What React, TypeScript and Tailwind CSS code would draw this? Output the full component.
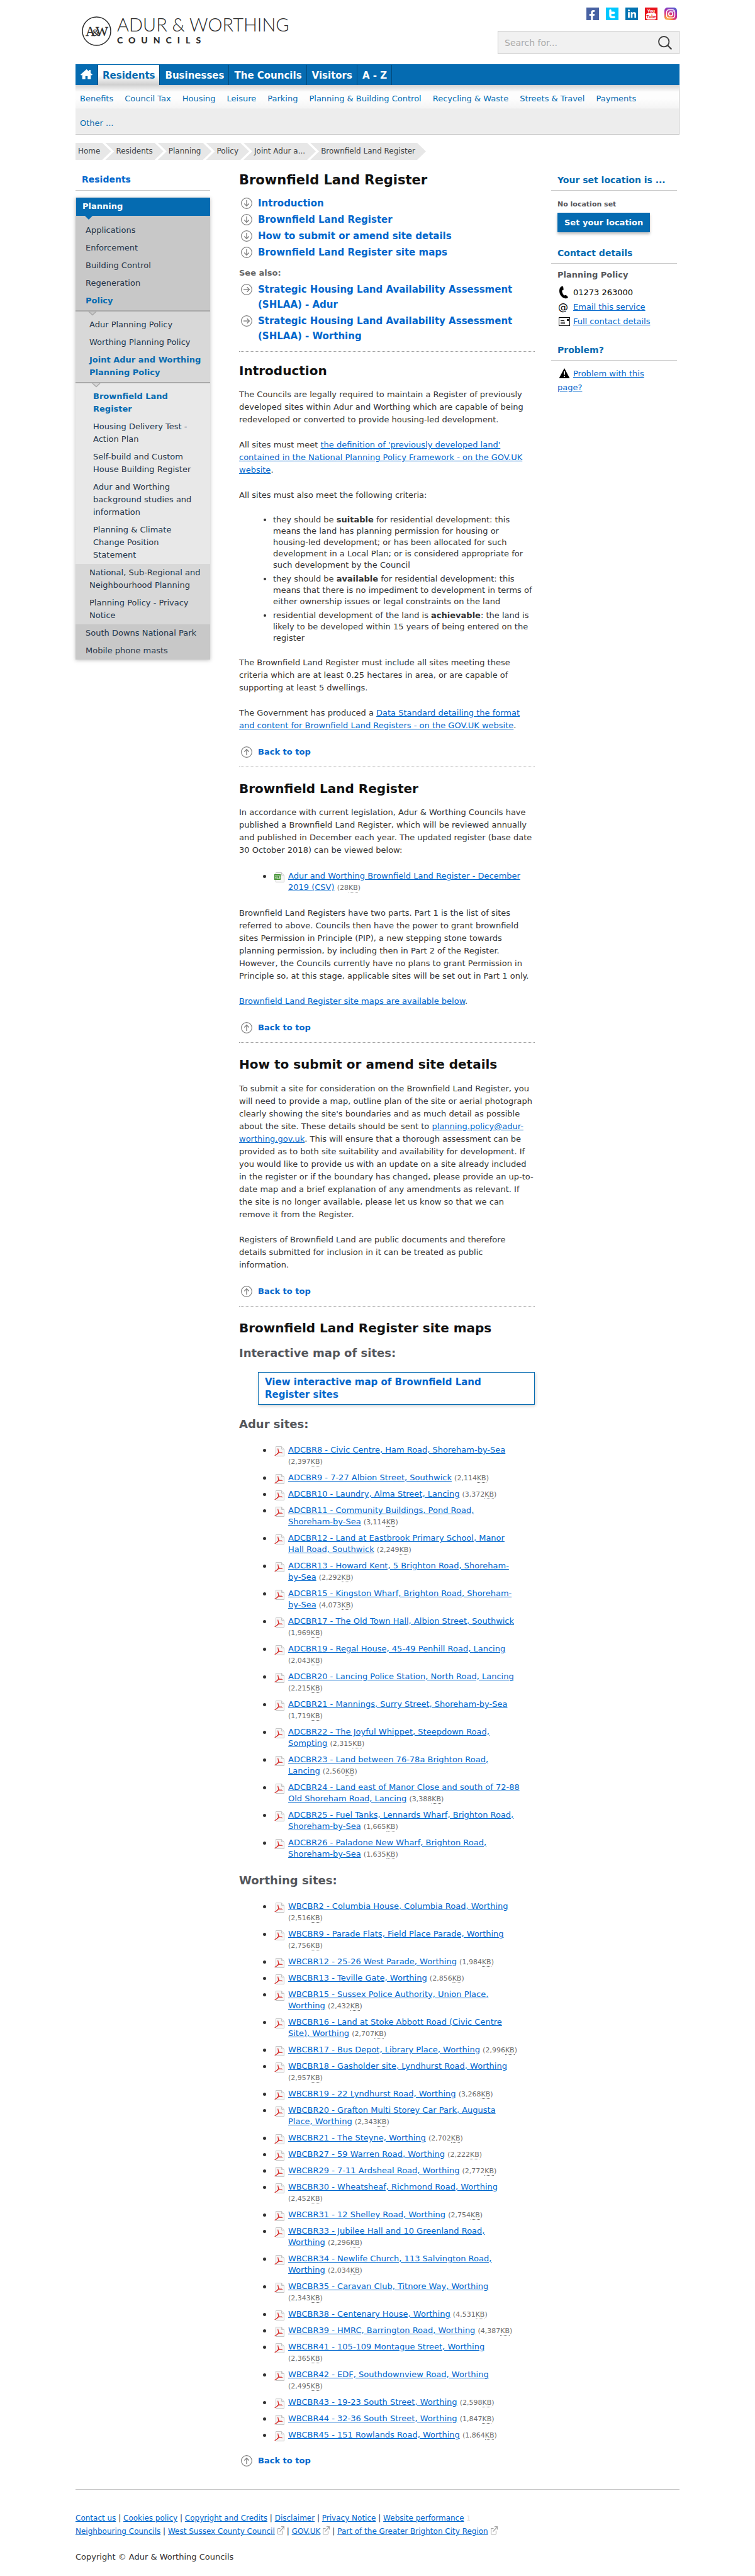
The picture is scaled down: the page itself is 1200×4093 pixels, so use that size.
import React from "react";
import { FaFacebookF, FaLinkedinIn } from "react-icons/fa";

const link = "text-[#0066cc] underline";

function ArrowCircle({ dir }: { dir: "up" | "down" | "right" }) {
  const turn = dir === "up" ? 180 : dir === "right" ? -90 : 0;
  return (
    <svg width="18" height="18" viewBox="0 0 18 18" fill="none" stroke="#808080" className="shrink-0" aria-hidden="true">
      <circle cx="9" cy="9" r="8.4" strokeWidth="1.2" />
      <g transform={`rotate(${turn} 9 9)`} strokeWidth="1.4">
        <path d="M9 4v9.4" />
        <path d="M5.3 9.6L9 13.3l3.7-3.7" />
      </g>
    </svg>
  );
}

function PdfIcon() {
  return (
    <svg width="16" height="16" viewBox="0 0 16 16" fill="none" className="shrink-0" aria-hidden="true">
      <path d="M2.5 0.5h9l4 4v11h-13z" fill="#f7f7f7" stroke="#c4c4c4" />
      <path d="M11.5 0.5v4h4" fill="#ececec" stroke="#c4c4c4" />
      <path d="M5.6 3.6c.9 2.8 1.2 4.8 1 6.2-.8 2-2.9 3.4-6 4.9" stroke="#d8332f" strokeWidth="1.3" />
      <path d="M6.2 6.5c.6 2 2 3.300 3.400 3.800 1.200.3 2.400.3 3.600.4M4 11.700c2.600-1.100 5.200-1.700 8-1.700" stroke="#d8332f" strokeWidth="1" />
    </svg>
  );
}

function CsvIcon() {
  return (
    <svg width="16" height="16" viewBox="0 0 16 16" fill="none" className="shrink-0" aria-hidden="true">
      <path d="M2.5 0.5h9l4 4v11h-13z" fill="#f7f7f7" stroke="#c4c4c4" />
      <path d="M11.5 0.5v4h4" fill="#ececec" stroke="#c4c4c4" />
      <rect x="0" y="3" width="10" height="9" fill="#3f8f2f" />
      <path d="M1 5h8M1 10.5h8" stroke="#c9e3bf" />
      <path d="M1.5 6.600l2 2.600m0-2.600l-2 2.600M5 6.400v2.900h1.400M8.800 6.700H7.400v1.200h1.300v1.300H7.300" stroke="#fff" strokeWidth=".8" />
    </svg>
  );
}

function ExternalIcon() {
  return (
    <svg width="11" height="13" viewBox="0 0 11 13" fill="none" stroke="#a0a0a0" className="mx-1 inline-block align-[-1px]" aria-hidden="true">
      <path d="M4.500 3.500H.6v9h7.800V7" />
      <path d="M3.500 8.500L10 1.400M6 .7h4.400v4.500" strokeWidth="1.300" />
    </svg>
  );
}

function Logo() {
  return (
    <a href="#home" className="mt-[26px] ml-[10px] flex items-start" aria-label="Adur & Worthing Councils">
      <svg width="47" height="47" viewBox="0 0 47 47" className="shrink-0" aria-hidden="true">
        <circle cx="23.500" cy="23.500" r="22.500" fill="none" stroke="#2b2b2b" strokeWidth="1.500" />
        <g fill="#2b2b2b" stroke="#2b2b2b" strokeWidth=".3" fontFamily="Liberation Serif, serif">
          <text x="6" y="31" fontSize="21">A</text>
          <text x="16.500" y="31" fontSize="15">&amp;</text>
          <text x="22" y="31" fontSize="21">W</text>
        </g>
      </svg>
      <span className="ml-[9px] flex flex-col font-['Lato'] text-[#2b2b2b]">
        <span className="text-[29px] leading-[26px] font-light">ADUR &amp; WORTHING</span>
        <span className="text-[14px] leading-[24px] font-black tracking-[9px]">COUNCILS</span>
      </span>
    </a>
  );
}

function SocialIcons() {
  return (
    <div className="flex gap-[11px]">
      <a href="#facebook" aria-label="Facebook" className="flex size-5 items-end justify-end bg-[#4862a3] pr-[3px] text-white">
        <FaFacebookF size={16} />
      </a>
      <a href="#twitter" aria-label="Twitter" className="size-5 bg-[#00c8ff]">
        <svg width="20" height="20" viewBox="0 0 20 20" fill="none" stroke="#fff" strokeWidth="3.400" strokeLinecap="round" strokeLinejoin="round">
          <path d="M7 4.500v8.300c0 1.400 1 2.400 2.500 2.400H13M7 8.300h5.800" />
        </svg>
      </a>
      <a href="#linkedin" aria-label="LinkedIn" className="flex size-5 items-center justify-center bg-[#0073b2] text-white">
        <FaLinkedinIn size={15} />
      </a>
      <a href="#youtube" aria-label="YouTube" className="size-5 bg-[#e9141d]">
        <svg width="20" height="20" viewBox="0 0 20 20" fontFamily="Roboto, sans-serif" fontWeight="700" textAnchor="middle" aria-hidden="true">
          <text x="10" y="7.500" fontSize="7" fill="#fff">You</text>
          <rect x="2" y="9" width="16" height="10" rx="3" fill="#fff" />
          <text x="10" y="16.700" fontSize="7" fill="#e9141d">Tube</text>
        </svg>
      </a>
      <a href="#instagram" aria-label="Instagram" className="size-5">
        <svg width="20" height="20" viewBox="0 0 20 20" fill="none" aria-hidden="true">
          <defs>
            <radialGradient id="ig" cx=".25" cy="1.050" r="1.150">
              <stop offset="0" stopColor="#fed576" />
              <stop offset=".28" stopColor="#f58a3c" />
              <stop offset=".55" stopColor="#d92e7f" />
              <stop offset=".8" stopColor="#9b36b7" />
              <stop offset="1" stopColor="#515ecf" />
            </radialGradient>
          </defs>
          <rect width="20" height="20" rx="5" fill="url(#ig)" />
          <rect x="3.500" y="3.500" width="13" height="13" rx="3.800" stroke="#fff" strokeWidth="1.500" />
          <circle cx="10" cy="10" r="3.200" stroke="#fff" strokeWidth="1.500" />
          <circle cx="13.800" cy="6.200" r=".9" fill="#fff" />
        </svg>
      </a>
    </div>
  );
}

const navItems = ["Residents", "Businesses", "The Councils", "Visitors", "A - Z"];
const subItems = ["Benefits", "Council Tax", "Housing", "Leisure", "Parking", "Planning & Building Control", "Recycling & Waste", "Streets & Travel", "Payments", "Other ..."];
const crumbs = ["Home", "Residents", "Planning", "Policy", "Joint Adur a...", "Brownfield Land Register"];

function Header() {
  return (
    <header>
      <div className="flex h-[102px] items-start justify-between">
        <Logo />
        <div className="flex flex-col items-end pt-3">
          <div className="pr-1">
            <SocialIcons />
          </div>
          <form className="mt-[17px] flex h-[37px] w-[289px] items-center border border-[#c8c8c8] bg-[#f1f1f1] pr-[11px]">
            <input type="search" aria-label="Search for" placeholder="Search for..." className="h-full min-w-0 flex-1 pl-[10px] text-[14px] outline-none placeholder:text-[#a9a9a9]" />
            <button type="button" aria-label="Search">
              <svg width="22" height="22" viewBox="0 0 22 22" fill="none" stroke="#3c3c3c" strokeWidth="1.800">
                <circle cx="9.200" cy="9.200" r="8.200" />
                <path d="M14.800 14.800l6.600 6.600" strokeWidth="2.200" />
              </svg>
            </button>
          </form>
        </div>
      </div>
      <nav aria-label="Main" className="flex h-[33px] bg-[#056bb1] pt-px">
        <a href="#home" aria-label="Home" className="flex w-[35px] justify-center border-r border-[#034a7b] pt-[7px]">
          <svg width="19" height="16" viewBox="0 0 19 16" fill="#fff">
            <path d="M9.500 0L0 8.600l1.200 1.100L2.700 8.500V16h5v-5h3.600v5h5V8.500l1.500 1.200L19 8.600l-3-2.700V1h-2.600v2.500z" />
          </svg>
        </a>
        {navItems.map((t, i) => (
          <a
            key={t}
            href="#nav"
            className={
              i === 0
                ? "ml-px border-r border-[#034a7b] bg-linear-to-b from-white from-50% to-[#cfcfcf] px-[7px] pt-[2px] text-[15px] leading-[30px] font-bold text-[#056bb1]"
                : "border-r border-[#034a7b] pt-[2px] pr-[7px] pl-2 text-[15px] leading-[30px] font-bold text-white"
            }
          >
            {t}
          </a>
        ))}
      </nav>
      <nav aria-label="Residents" className="border-r border-b border-[#c8c8c8] bg-[linear-gradient(to_bottom,#d2d2d2_0,#fdfdfd_11px,#fdfdfd_22px,#f4f4f4_37px,#ededed_38px)]">
        <ul className="flex flex-wrap gap-x-1">
          {subItems.map((t) => (
            <li key={t} className="h-[39px] px-[7px] pt-3 leading-5">
              <a href="#sub" className="text-[#056bb1]">{t}</a>
            </li>
          ))}
        </ul>
      </nav>
      <nav aria-label="Breadcrumb" className="mt-[13px]">
        <ol className="flex text-[12px] leading-[27px]">
          {crumbs.map((t, i) => (
            <li
              key={i}
              className={
                i === 0
                  ? "bg-[#e7e7e7] pr-[17px] pl-1 [clip-path:polygon(0_0,calc(100%_-_14px)_0,100%_50%,calc(100%_-_14px)_100%,0_100%)]"
                  : "-ml-[9px] bg-[#e7e7e7] px-[17px] [clip-path:polygon(0_0,calc(100%_-_14px)_0,100%_50%,calc(100%_-_14px)_100%,0_100%,14px_50%)]"
              }
            >
              <a href="#crumb" className="text-[#444]">{t}</a>
            </li>
          ))}
        </ol>
      </nav>
    </header>
  );
}

function SideItem({ children, level = 2, active = false }: { children: React.ReactNode; level?: 2 | 3 | 4; active?: boolean }) {
  const pad = level === 2 ? "pl-4" : level === 3 ? "pl-[22px]" : "pl-7";
  return (
    <li className={`${pad} py-1 pr-3`}>
      <a href="#side" className={active ? "font-bold text-[#056bb1]" : "text-[#24364b]"}>{children}</a>
    </li>
  );
}

/* Rule with a small notch that points from a parent entry into its child list. */
function Notch({ above, className }: { above: string; className: string }) {
  return (
    <div className="h-[10px]" aria-hidden="true">
      <div className="h-[3px] border-b-2 border-[#a9a9a9]" style={{ background: above }} />
      <svg width="14" height="7" viewBox="0 0 14 7" className={className}>
        <path d="M1 0l6 5.500L13 0" fill={above} stroke="#a9a9a9" strokeWidth="1.500" />
        <path d="M2 0h10" stroke={above} />
      </svg>
    </div>
  );
}

function Sidebar() {
  return (
    <aside className="w-[214px] shrink-0 pt-[21px] leading-5">
      <div className="border-b border-[#c8c8c8] pb-[7px] pl-[10px] text-[14px]">
        <a href="#residents" className="font-bold text-[#0066cc]">Residents</a>
      </div>
      <div className="mt-[11px] shadow-[0_1px_6px_rgba(0,0,0,0.25)]">
        <div className="border-l border-[#d0d0d0] bg-[#056bb1] py-[4px] pb-[5px] pl-[10px]">
          <a href="#planning" className="font-bold text-white">Planning</a>
        </div>
        <div className="bg-[#c8c8c8]">
          <div className="h-[9px]" aria-hidden="true">
            <svg width="12" height="6" viewBox="0 0 12 6" className="ml-[15px]"><path d="M0 0h12L6 6z" fill="#056bb1" /></svg>
          </div>
          <ul>
            <SideItem>Applications</SideItem>
            <SideItem>Enforcement</SideItem>
            <SideItem>Building Control</SideItem>
            <SideItem>Regeneration</SideItem>
            <SideItem active>Policy</SideItem>
          </ul>
        </div>
        <div className="bg-[#d8d8d8]">
          <Notch above="#c8c8c8" className="ml-[20px]" />
          <ul>
            <SideItem level={3}>Adur Planning Policy</SideItem>
            <SideItem level={3}>Worthing Planning Policy</SideItem>
            <SideItem level={3} active>Joint Adur and Worthing Planning Policy</SideItem>
          </ul>
        </div>
        <div className="bg-[#e8e8e8]">
          <Notch above="#d8d8d8" className="ml-[26px]" />
          <ul>
            <SideItem level={4} active>Brownfield Land Register</SideItem>
            <SideItem level={4}>Housing Delivery Test - Action Plan</SideItem>
            <SideItem level={4}>Self-build and Custom House Building Register</SideItem>
            <SideItem level={4}>Adur and Worthing background studies and information</SideItem>
            <SideItem level={4}>Planning &amp; Climate Change Position Statement</SideItem>
          </ul>
        </div>
        <ul className="bg-[#d8d8d8]">
          <SideItem level={3}>National, Sub-Regional and Neighbourhood Planning</SideItem>
          <SideItem level={3}>Planning Policy - Privacy Notice</SideItem>
        </ul>
        <ul className="bg-[#c8c8c8]">
          <SideItem>South Downs National Park</SideItem>
          <SideItem>Mobile phone masts</SideItem>
        </ul>
      </div>
    </aside>
  );
}

function JumpLink({ dir, children }: { dir: "down" | "right"; children: React.ReactNode }) {
  return (
    <li className="flex gap-[9px] pb-[2px] pl-[3px] text-[15px] leading-6 font-bold">
      <span className="pt-[3px]"><ArrowCircle dir={dir} /></span>
      <a href="#jump" className="text-[#0066cc]">{children}</a>
    </li>
  );
}

function BackToTop() {
  return (
    <p className="mt-[22px] flex items-center gap-[9px] pl-[3px] leading-5">
      <ArrowCircle dir="up" />
      <a href="#top" className="font-bold text-[#0066cc]">Back to top</a>
    </p>
  );
}

function H2({ children }: { children: React.ReactNode }) {
  return <h2 className="text-[20px] leading-7 font-bold text-[#111]">{children}</h2>;
}

function H3({ children }: { children: React.ReactNode }) {
  return <h3 className="text-[18px] leading-6 font-bold text-[#54565b]">{children}</h3>;
}

function Divider() {
  return <hr className="mt-[13px] mb-5 border-t border-dotted border-[#999]" />;
}

function Doc({ name, size, icon }: { name: string; size: string; icon?: React.ReactNode }) {
  return (
    <li className="flex leading-[18px]">
      <span className="mt-[7px] mr-[13px] size-[5px] shrink-0 rounded-full bg-[#333]" aria-hidden="true" />
      <span className="mt-[3px] mr-[6px] h-[15px]">{icon ?? <PdfIcon />}</span>
      <span>
        <a href="#doc" className={link}>{name}</a>{" "}
        <span className="text-[11px] leading-4 text-[#6c6c6c]">
          ({size}<abbr title="kilobytes" className="border-b border-dotted border-[#6c6c6c] no-underline">KB</abbr>)
        </span>
      </span>
    </li>
  );
}

const adur: [string, string][] = [
  ["ADCBR8 - Civic Centre, Ham Road, Shoreham-by-Sea", "2,397"],
  ["ADCBR9 - 7-27 Albion Street, Southwick", "2,114"],
  ["ADCBR10 - Laundry, Alma Street, Lancing", "3,372"],
  ["ADCBR11 - Community Buildings, Pond Road, Shoreham-by-Sea", "3,114"],
  ["ADCBR12 - Land at Eastbrook Primary School, Manor Hall Road, Southwick", "2,249"],
  ["ADCBR13 - Howard Kent, 5 Brighton Road, Shoreham-by-Sea", "2,292"],
  ["ADCBR15 - Kingston Wharf, Brighton Road, Shoreham-by-Sea", "4,073"],
  ["ADCBR17 - The Old Town Hall, Albion Street, Southwick", "1,969"],
  ["ADCBR19 - Regal House, 45-49 Penhill Road, Lancing", "2,043"],
  ["ADCBR20 - Lancing Police Station, North Road, Lancing", "2,215"],
  ["ADCBR21 - Mannings, Surry Street, Shoreham-by-Sea", "1,719"],
  ["ADCBR22 - The Joyful Whippet, Steepdown Road, Sompting", "2,315"],
  ["ADCBR23 - Land between 76-78a Brighton Road, Lancing", "2,560"],
  ["ADCBR24 - Land east of Manor Close and south of 72-88 Old Shoreham Road, Lancing", "3,388"],
  ["ADCBR25 - Fuel Tanks, Lennards Wharf, Brighton Road, Shoreham-by-Sea", "1,665"],
  ["ADCBR26 - Paladone New Wharf, Brighton Road, Shoreham-by-Sea", "1,635"],
];

const worthing: [string, string][] = [
  ["WBCBR2 - Columbia House, Columbia Road, Worthing", "2,516"],
  ["WBCBR9 - Parade Flats, Field Place Parade, Worthing", "2,756"],
  ["WBCBR12 - 25-26 West Parade, Worthing", "1,984"],
  ["WBCBR13 - Teville Gate, Worthing", "2,856"],
  ["WBCBR15 - Sussex Police Authority, Union Place, Worthing", "2,432"],
  ["WBCBR16 - Land at Stoke Abbott Road (Civic Centre Site), Worthing", "2,707"],
  ["WBCBR17 - Bus Depot, Library Place, Worthing", "2,996"],
  ["WBCBR18 - Gasholder site, Lyndhurst Road, Worthing", "2,957"],
  ["WBCBR19 - 22 Lyndhurst Road, Worthing", "3,268"],
  ["WBCBR20 - Grafton Multi Storey Car Park, Augusta Place, Worthing", "2,343"],
  ["WBCBR21 - The Steyne, Worthing", "2,702"],
  ["WBCBR27 - 59 Warren Road, Worthing", "2,222"],
  ["WBCBR29 - 7-11 Ardsheal Road, Worthing", "2,772"],
  ["WBCBR30 - Wheatsheaf, Richmond Road, Worthing", "2,452"],
  ["WBCBR31 - 12 Shelley Road, Worthing", "2,754"],
  ["WBCBR33 - Jubilee Hall and 10 Greenland Road, Worthing", "2,296"],
  ["WBCBR34 - Newlife Church, 113 Salvington Road, Worthing", "2,034"],
  ["WBCBR35 - Caravan Club, Titnore Way, Worthing", "2,343"],
  ["WBCBR38 - Centenary House, Worthing", "4,531"],
  ["WBCBR39 - HMRC, Barrington Road, Worthing", "4,387"],
  ["WBCBR41 - 105-109 Montague Street, Worthing", "2,365"],
  ["WBCBR42 - EDF, Southdownview Road, Worthing", "2,495"],
  ["WBCBR43 - 19-23 South Street, Worthing", "2,598"],
  ["WBCBR44 - 32-36 South Street, Worthing", "1,847"],
  ["WBCBR45 - 151 Rowlands Road, Worthing", "1,864"],
];

function DocList({ docs }: { docs: [string, string][] }) {
  return (
    <ul className="mt-5 flex flex-col gap-2 pr-[22px] pl-[38px]">
      {docs.map(([name, size]) => (
        <Doc key={name} name={name} size={size} />
      ))}
    </ul>
  );
}

function Main() {
  return (
    <main className="mr-[26px] ml-[46px] min-w-0 flex-1 pt-[18px] leading-5">
      <h1 className="text-[21px] leading-7 font-bold text-[#111]">Brownfield Land Register</h1>
      <ul className="mt-[11px]">
        <JumpLink dir="down">Introduction</JumpLink>
        <JumpLink dir="down">Brownfield Land Register</JumpLink>
        <JumpLink dir="down">How to submit or amend site details</JumpLink>
        <JumpLink dir="down">Brownfield Land Register site maps</JumpLink>
      </ul>
      <p className="mt-[9px] font-bold text-[#666]">See also:</p>
      <ul className="mt-1">
        <JumpLink dir="right">Strategic Housing Land Availability Assessment (SHLAA) - Adur</JumpLink>
        <JumpLink dir="right">Strategic Housing Land Availability Assessment (SHLAA) - Worthing</JumpLink>
      </ul>
      <hr className="mt-[10px] mb-4 border-t border-dotted border-[#999]" />

      <H2>Introduction</H2>
      <div className="mt-[14px] flex flex-col gap-5">
        <p>
          The Councils are legally required to maintain a Register of previously developed sites within Adur and Worthing which are capable of being redeveloped or converted to provide housing-led development.
        </p>
        <p>
          All sites must meet{" "}
          <a href="#nppf" className={link}>the definition of 'previously developed land' contained in the National Planning Policy Framework - on the GOV.UK website</a>.
        </p>
        <p>All sites must also meet the following criteria:</p>
        <ul className="flex list-disc flex-col gap-1 pl-[54px] leading-[18px]">
          <li>
            they should be <strong>suitable</strong> for residential development: this means the land has planning permission for housing or housing-led development; or has been allocated for such development in a Local Plan; or is considered appropriate for such development by the Council
          </li>
          <li>
            they should be <strong>available</strong> for residential development: this means that there is no impediment to development in terms of either ownership issues or legal constraints on the land
          </li>
          <li>
            residential development of the land is <strong>achievable</strong>: the land is likely to be developed within 15 years of being entered on the register
          </li>
        </ul>
        <p>
          The Brownfield Land Register must include all sites meeting these criteria which are at least 0.25 hectares in area, or are capable of supporting at least 5 dwellings.
        </p>
        <p>
          The Government has produced a{" "}
          <a href="#standard" className={link}>Data Standard detailing the format and content for Brownfield Land Registers - on the GOV.UK website</a>.
        </p>
      </div>
      <BackToTop />
      <Divider />

      <H2>Brownfield Land Register</H2>
      <p className="mt-[14px]">
        In accordance with current legislation, Adur &amp; Worthing Councils have published a Brownfield Land Register, which will be reviewed annually and published in December each year. The updated register (base date 30 October 2018) can be viewed below:
      </p>
      <ul className="my-[22px] pr-[22px] pl-[38px]">
        <Doc name="Adur and Worthing Brownfield Land Register - December 2019 (CSV)" size="28" icon={<CsvIcon />} />
      </ul>
      <p>
        Brownfield Land Registers have two parts. Part 1 is the list of sites referred to above. Councils then have the power to grant brownfield sites Permission in Principle (PIP), a new stepping stone towards planning permission, by including then in Part 2 of the Register. However, the Councils currently have no plans to grant Permission in Principle so, at this stage, applicable sites will be set out in Part 1 only.
      </p>
      <p className="mt-5">
        <a href="#maps" className={link}>Brownfield Land Register site maps are available below</a>.
      </p>
      <BackToTop />
      <Divider />

      <H2>How to submit or amend site details</H2>
      <p className="mt-[15px]">
        To submit a site for consideration on the Brownfield Land Register, you will need to provide a map, outline plan of the site or aerial photograph clearly showing the site's boundaries and as much detail as possible about the site. These details should be sent to{" "}
        <a href="#mail" className={link}>planning.policy@adur-worthing.gov.uk</a>. This will ensure that a thorough assessment can be provided as to both site suitability and availability for development. If you would like to provide us with an update on a site already included in the register or if the boundary has changed, please provide an up-to-date map and a brief explanation of any amendments as relevant. If the site is no longer available, please let us know so that we can remove it from the Register.
      </p>
      <p className="mt-5">
        Registers of Brownfield Land are public documents and therefore details submitted for inclusion in it can be treated as public information.
      </p>
      <BackToTop />
      <Divider />

      <div className="flex flex-col gap-[14px]">
        <H2>Brownfield Land Register site maps</H2>
        <H3>Interactive map of sites:</H3>
      </div>
      <a href="#map" className="mt-[18px] mb-[19px] ml-[30px] block border border-[#056bb1] py-[5px] pr-[60px] pl-[10px] text-[15px] font-bold text-[#0066cc] shadow-[1px_2px_5px_rgba(0,0,0,0.18)]">
        View interactive map of Brownfield Land Register sites
      </a>
      <H3>Adur sites:</H3>
      <DocList docs={adur} />
      <div className="mt-[21px]">
        <H3>Worthing sites:</H3>
      </div>
      <DocList docs={worthing} />
      <BackToTop />
    </main>
  );
}

function PanelHeading({ children }: { children: React.ReactNode }) {
  return <h2 className="border-b border-[#c8c8c8] pb-[6px] pl-[10px] text-[14px] leading-5 font-bold text-[#056bb1]">{children}</h2>;
}

function RightColumn() {
  return (
    <aside className="w-[204px] shrink-0 pt-[22px] pr-1">
      <PanelHeading>Your set location is ...</PanelHeading>
      <div className="pl-[10px]">
        <p className="mt-[14px] text-[11px] leading-4 font-bold text-[#54565b]">No location set</p>
        <button type="button" className="mt-[5px] h-[31px] bg-[#056bb1] px-[11px] font-bold text-white shadow-[0_3px_4px_rgba(0,0,0,0.25)]">Set your location</button>
      </div>
      <div className="mt-[23px]">
        <PanelHeading>Contact details</PanelHeading>
      </div>
      <div className="pl-[10px]">
        <p className="mt-2 mb-[6px] leading-5 font-bold text-[#54565b]">Planning Policy</p>
        <ul className="leading-[23px]">
          <li className="flex items-center text-black">
            <svg width="25" height="20" viewBox="0 0 25 20" aria-hidden="true">
              <path d="M6 .2L9 0l.8 5.200-2.600 1.500c.2 3 1.400 5.600 3.400 7.700l3-.7 3.400 3.300c-1 2-2.800 2.700-5 2C6.200 17.800 3 12.500 3 7 3 4 4 1.500 6 .2z" />
            </svg>
            01273 263000
          </li>
          <li className="flex items-center">
            <span className="w-[25px] pl-px text-[16px] leading-4 text-black" aria-hidden="true">@</span>
            <a href="#email" className={link}>Email this service</a>
          </li>
          <li className="flex items-center">
            <svg width="25" height="14" viewBox="0 0 25 14" fill="none" stroke="#000" aria-hidden="true">
              <rect x="2.500" y=".5" width="17" height="13" />
              <path d="M5 5.500h6M5 8h7M5 10.500h7" />
              <rect x="15.500" y="3.500" width="2" height="2" />
            </svg>
            <a href="#contact" className={link}>Full contact details</a>
          </li>
        </ul>
      </div>
      <div className="mt-6">
        <PanelHeading>Problem?</PanelHeading>
      </div>
      <p className="mt-[10px] pr-6 pl-[10px] leading-[22px]">
        <svg width="25" height="16" viewBox="0 0 25 16" className="inline-block align-[-3px]" aria-hidden="true">
          <path d="M11 0l8.500 16h-17z" fill="#000" />
          <path d="M11 5v5.500M11 12v2" stroke="#fff" strokeWidth="1.800" />
        </svg>
        <a href="#problem" className={link}>Problem with this page?</a>
      </p>
    </aside>
  );
}

const footerA = ["Contact us", "Cookies policy", "Copyright and Credits", "Disclaimer", "Privacy Notice", "Website performance"];
const footerB = ["Neighbouring Councils", "West Sussex County Council", "GOV.UK", "Part of the Greater Brighton City Region"];

function Footer() {
  return (
    <footer className="mt-[35px] border-t border-[#c8c8c8] pt-[35px] pb-5">
      <div className="text-[12px] leading-[21px]">
        <p>
          {footerA.map((t, i) => (
            <React.Fragment key={t}>
              {i > 0 && " | "}
              <a href="#foot" className={link}>{t}</a>
            </React.Fragment>
          ))}
          <span className="ml-1 text-[10px] leading-4 text-[#ddd]">1</span>
        </p>
        <p>
          {footerB.map((t, i) => (
            <React.Fragment key={t}>
              {i > 0 && (i > 1 ? "| " : " | ")}
              <a href="#foot" className={link}>{t}</a>
              {i > 0 && <ExternalIcon />}
            </React.Fragment>
          ))}
        </p>
      </div>
      <p className="mt-5 leading-5">Copyright © Adur &amp; Worthing Councils</p>
    </footer>
  );
}

export default function App() {
  return (
    <div className="min-h-screen bg-white font-['DejaVu_Sans',sans-serif] text-[13px] text-[#333]">
      <div id="top" className="mx-auto max-w-[960px]">
        <Header />
        <div className="flex items-start">
          <Sidebar />
          <Main />
          <RightColumn />
        </div>
        <Footer />
      </div>
    </div>
  );
}
